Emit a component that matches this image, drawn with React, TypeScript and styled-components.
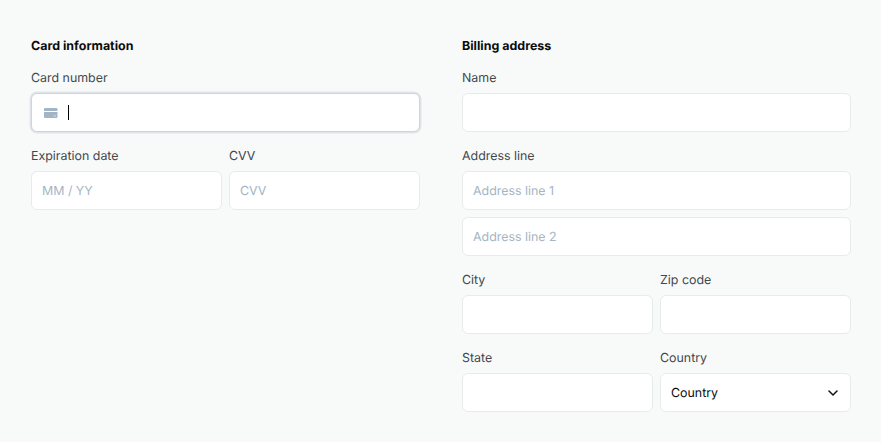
import React from "react";
import styled, { createGlobalStyle } from "styled-components";

const GlobalStyle = createGlobalStyle`
  *, *::before, *::after { box-sizing: border-box; }
  body { margin: 0; background: #f8faf9; font-family: Inter, sans-serif; font-size: 12.42px; text-rendering: geometricPrecision; }
`;

const Page = styled.main`
  display: grid;
  grid-template-columns: 389px 389px;
  column-gap: 42px;
  align-items: start;
  height: 442px;
  padding: 39px 30px 0 31px;
`;

const Section = styled.section`
  display: flex;
  flex-direction: column;
`;

const Heading = styled.h2`
  margin: 0 0 15px;
  font-size: 12.44px;
  line-height: 16px;
  font-weight: 650;
  color: #0b0c0c;
`;

const FieldRow = styled.div`
  display: grid;
  grid-template-columns: 1fr 1fr;
  column-gap: 7px;
`;

const Field = styled.div`
  display: flex;
  flex-direction: column;
  margin-bottom: 16px;
`;

const Label = styled.label`
  height: 23px;
  line-height: 16px;
  color: #43484e;
`;

const Control = styled.div<{ $focused?: boolean }>`
  display: flex;
  align-items: center;
  height: 39px;
  padding: 1px 10px 0;
  background: #fff;
  border: 1px solid ${(p) => (p.$focused ? "#ccd5dd" : "#e8ebec")};
  border-radius: 6px;
  box-shadow: ${(p) => (p.$focused ? "0 0 0 1.5px #dfe5e9" : "none")};
  & + & { margin-top: 7px; }
`;

const Input = styled.input`
  width: 100%;
  min-width: 0;
  height: 18px;
  padding: 0 0 2px;
  border: 0;
  outline: 0;
  background: transparent;
  font: inherit;
  color: #0b0c0c;
  text-rendering: inherit;
  &::placeholder { color: #a3b5c4; opacity: 1; }
`;

const CardIcon = styled.svg`
  width: 14px;
  height: 10px;
  margin-left: 2px;
  flex: none;
`;

const Caret = styled.span`
  width: 1px;
  height: 15px;
  margin: 0 0 1px 10px;
  background: #000;
`;

const SelectValue = styled.span`
  flex: 1;
  line-height: 16px;
  color: #0b0c0c;
`;

const Chevron = styled.svg`
  width: 10px;
  height: 6px;
  margin-right: 2px;
`;

function TextField({ label, placeholders = [""] }: { label: string; placeholders?: string[] }) {
  return (
    <Field>
      <Label>{label}</Label>
      {placeholders.map((text, i) => (
        <Control key={i}>
          <Input aria-label={label} placeholder={text} />
        </Control>
      ))}
    </Field>
  );
}

export default function App() {
  return (
    <>
      <GlobalStyle />
      <Page>
        <Section>
          <Heading>Card information</Heading>
          <Field>
            <Label>Card number</Label>
            <Control $focused>
              <CardIcon viewBox="0 0 14 10" fill="#a3b5c4">
                <path d="M1.2 0h11.1A1.2 1.2 0 0 1 13.5 1.2V3H0V1.2A1.2 1.2 0 0 1 1.2 0ZM0 4h13.5v4.8A1.2 1.2 0 0 1 12.3 10h-11.1A1.2 1.2 0 0 1 0 8.8Z" />
                <path d="M9.3 7.9h2.7" stroke="#d5dee5" strokeWidth="1" />
              </CardIcon>
              <Caret />
            </Control>
          </Field>
          <FieldRow>
            <TextField label="Expiration date" placeholders={["MM / YY"]} />
            <TextField label="CVV" placeholders={["CVV"]} />
          </FieldRow>
        </Section>
        <Section>
          <Heading>Billing address</Heading>
          <TextField label="Name" />
          <TextField label="Address line" placeholders={["Address line 1", "Address line 2"]} />
          <FieldRow>
            <TextField label="City" />
            <TextField label="Zip code" />
            <TextField label="State" />
            <Field>
              <Label>Country</Label>
              <Control>
                <SelectValue>Country</SelectValue>
                <Chevron viewBox="0 0 10 6" fill="none" stroke="#111" strokeWidth="1.5" strokeLinecap="round" strokeLinejoin="round">
                  <path d="M1 1l4 4 4-4" />
                </Chevron>
              </Control>
            </Field>
          </FieldRow>
        </Section>
      </Page>
    </>
  );
}
